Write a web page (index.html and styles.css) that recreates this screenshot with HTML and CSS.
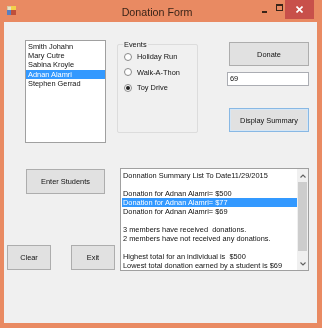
FILE: index.html
```html
<!DOCTYPE html>
<html>
<head>
<meta charset="utf-8">
<link rel="stylesheet" href="styles.css">
</head>
<body>
<div class="window">
  <div class="titlebar">
    <div class="tb-left">
      <svg class="appicon" width="9" height="9" viewBox="0 0 9 9">
        <rect x="0" y="0" width="9" height="9" fill="#d9c9a0"/>
        <rect x="4" y="0" width="5" height="4" fill="#f2d24a"/>
        <rect x="0" y="4" width="4" height="5" fill="#5a7fc0"/>
        <rect x="4" y="4" width="5" height="5" fill="#c0503a"/>
        <rect x="1" y="1" width="3" height="3" fill="#e8e0c8"/>
      </svg>
    </div>
    <div class="title">Donation Form</div>
    <div class="tb-right">
      <div class="ctl min"><span class="minbar"></span></div>
      <div class="ctl max"><span class="maxbox"></span></div>
      <div class="ctl close">
        <svg width="7" height="7" viewBox="0 0 7 7"><path d="M0.5 0.5L6.5 6.5M6.5 0.5L0.5 6.5" stroke="#fff" stroke-width="1.6"/></svg>
      </div>
    </div>
  </div>
  <div class="client">
    <div class="row1">
      <div class="listbox names">
        <div class="item">Smith Johahn</div>
        <div class="item">Mary Cutre</div>
        <div class="item">Sabina Kroyle</div>
        <div class="item selected">Adnan Alamri</div>
        <div class="item">Stephen Gerrad</div>
      </div>
      <div class="groupbox">
        <div class="legend">Events</div>
        <div class="radio"><span class="circle"></span><span>Holiday Run</span></div>
        <div class="radio"><span class="circle"></span><span>Walk-A-Thon</span></div>
        <div class="radio"><span class="circle checked"></span><span>Toy Drive</span></div>
      </div>
      <div class="rightcol">
        <div class="btn donate">Donate</div>
        <div class="textbox">69</div>
        <div class="btn focused summary-btn">Display Summary</div>
      </div>
    </div>
    <div class="row2">
      <div class="leftcol">
        <div class="btn enter">Enter Students</div>
        <div class="btnrow">
          <div class="btn small clear">Clear</div>
          <div class="btn small exit">Exit</div>
        </div>
      </div>
      <div class="listbox summary">
        <div class="lines">
          <div class="line">Donnation Summary List To Date11/29/2015</div>
          <div class="line">&nbsp;</div>
          <div class="line">Donation for Adnan Alamri= $500</div>
          <div class="line selected">Donation for Adnan Alamri= $77</div>
          <div class="line">Donation for Adnan Alamri= $69</div>
          <div class="line">&nbsp;</div>
          <div class="line">3 members have received&nbsp; donations.</div>
          <div class="line">2 members have not received any donations.</div>
          <div class="line">&nbsp;</div>
          <div class="line">Highest total for an individual is&nbsp; $500</div>
          <div class="line">Lowest total donation earned by a student is $69</div>
        </div>
        <div class="scrollbar">
          <div class="arrow up"><svg width="6" height="4" viewBox="0 0 6 4"><path d="M0.5 3.5L3 1L5.5 3.5" fill="none" stroke="#606060" stroke-width="1.1"/></svg></div>
          <div class="thumb"></div>
          <div class="track"></div>
          <div class="arrow down"><svg width="6" height="4" viewBox="0 0 6 4"><path d="M0.5 0.5L3 3L5.5 0.5" fill="none" stroke="#606060" stroke-width="1.1"/></svg></div>
        </div>
      </div>
    </div>
  </div>
</div>
</body>
</html>
```

FILE: styles.css
```css
html, body {
  margin: 0;
  padding: 0;
  background: #ffffff;
}
body {
  font-family: "Liberation Sans", Arial, sans-serif;
  font-size: 7.4px;
  color: #111;
  -webkit-font-smoothing: antialiased;
}
.window {
  width: 322px;
  height: 328px;
  background: #e98a62;
  display: flex;
  flex-direction: column;
  will-change: transform;
}
.titlebar {
  height: 22px;
  display: flex;
  align-items: flex-start;
}
.tb-left {
  width: 60px;
  height: 22px;
  display: flex;
}
.appicon {
  margin: 6px 0 0 7px;
}
.title {
  flex: 1;
  text-align: center;
  font-size: 10.7px;
  line-height: 12px;
  margin-top: 6px;
  color: #3a2418;
}
.tb-right {
  width: 60px;
  display: flex;
  justify-content: flex-end;
  padding-right: 8px;
}
.ctl {
  height: 19px;
  display: flex;
  align-items: center;
  justify-content: center;
}
.min {
  width: 17px;
}
.minbar {
  width: 5px;
  height: 2px;
  background: #3a2418;
  margin-top: 4px;
}
.max {
  width: 12px;
}
.maxbox {
  width: 5px;
  height: 4px;
  border: 1px solid #3a2418;
  border-top-width: 2px;
  margin-top: -5px;
}
.close {
  width: 29px;
  background: #c8504a;
}
.client {
  margin: 0 5px 5px 4px;
  flex: 1;
  background: #f0f0f0;
  display: flex;
  flex-direction: column;
}
.row1 {
  display: flex;
  align-items: flex-start;
  margin-top: 18px;
  padding-left: 21px;
}
.listbox {
  background: #fff;
  border: 1px solid #a0a0a0;
  box-sizing: border-box;
}
.names {
  width: 81px;
  height: 103px;
  padding-top: 1px;
}
.names .item {
  line-height: 9.2px;
  height: 9.2px;
  padding-left: 2px;
  white-space: nowrap;
}
.selected {
  background: #3399ff;
  color: #fff;
}
.groupbox {
  margin-left: 11px;
  margin-top: 4px;
  width: 81px;
  height: 89px;
  box-sizing: border-box;
  border: 1px solid #dcdcdc;
  border-radius: 2px;
  padding-left: 6px;
}
.legend {
  margin-top: -5px;
  margin-left: -1px;
  line-height: 9px;
  padding: 0 1px;
  background: #f0f0f0;
  width: max-content;
}
.radio {
  display: flex;
  align-items: center;
  height: 15.5px;
  white-space: nowrap;
}
.radio:first-of-type {
  margin-top: 4px;
}
.circle {
  width: 8px;
  height: 8px;
  box-sizing: border-box;
  border: 1px solid #8a8a8a;
  border-radius: 50%;
  background: #fff;
  margin-right: 5px;
  display: flex;
  align-items: center;
  justify-content: center;
}
.circle.checked::after {
  content: "";
  width: 4px;
  height: 4px;
  border-radius: 50%;
  background: #222;
}
.rightcol {
  margin-left: 31px;
  width: 80px;
  display: flex;
  flex-direction: column;
}
.btn {
  box-sizing: border-box;
  border: 1px solid #adadad;
  background: #e1e1e1;
  display: flex;
  align-items: center;
  justify-content: center;
  white-space: nowrap;
}
.donate {
  margin-top: 2px;
  height: 24px;
}
.textbox {
  margin-top: 6px;
  margin-left: -2px;
  width: 82px;
  height: 14px;
  box-sizing: border-box;
  border: 1px solid #abadb3;
  background: #fff;
  padding-left: 2px;
  line-height: 12px;
}
.focused {
  border-color: #88b8e4;
  box-shadow: inset 0 0 0 1px #d5e6f5;
}
.summary-btn {
  margin-top: 22px;
  height: 24px;
}
.row2 {
  display: flex;
  align-items: flex-start;
  margin-top: 25px;
}
.leftcol {
  width: 116px;
  display: flex;
  flex-direction: column;
}
.enter {
  margin-left: 22px;
  margin-top: 1px;
  width: 79px;
  height: 25px;
}
.btnrow {
  display: flex;
  margin-top: 51px;
  margin-left: 3px;
  gap: 20px;
}
.small {
  width: 44px;
  height: 25px;
}
.summary {
  width: 189px;
  height: 103px;
  display: flex;
}
.lines {
  flex: 1;
  padding-top: 1.5px;
  padding-left: 1px;
  overflow: hidden;
}
.line {
  line-height: 9px;
  height: 9px;
  padding-left: 1px;
  white-space: nowrap;
}
.scrollbar {
  width: 11px;
  display: flex;
  flex-direction: column;
  background: #f0f0f0;
}
.arrow {
  height: 13px;
  display: flex;
  align-items: center;
  justify-content: center;
}
.thumb {
  height: 69px;
  background: #cdcdcd;
  margin: 0 1px;
}
.track {
  flex: 1;
}
```
